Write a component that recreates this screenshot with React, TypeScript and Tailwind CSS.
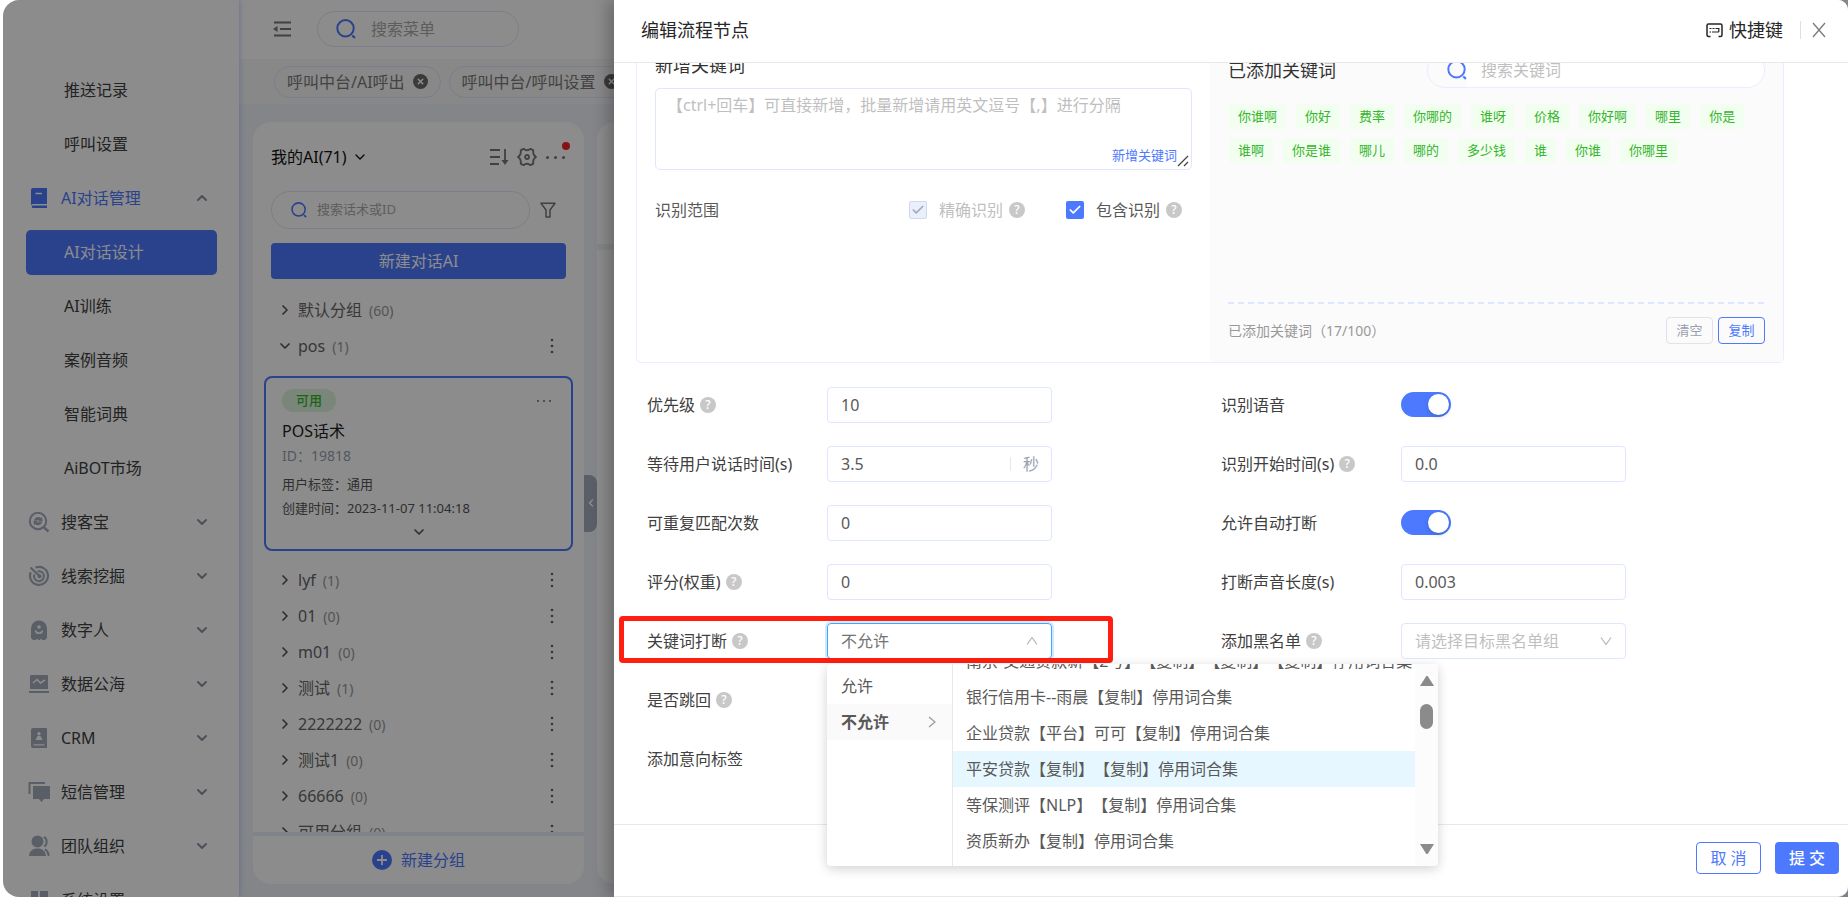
import type { ReactNode } from "react";
import { Check, ChevronDown, ChevronLeft, ChevronRight, ChevronUp, X } from "lucide-react";
import clsx from "clsx";

type IconName =
  | "book"
  | "search"
  | "radar"
  | "ghost"
  | "screen"
  | "contact"
  | "message"
  | "team"
  | "grid";

interface NavItem {
  label: string;
  icon?: IconName;
  open?: boolean;
  active?: boolean;
}

const NAV_ITEMS: NavItem[] = [
  { label: "推送记录" },
  { label: "呼叫设置" },
  { label: "AI对话管理", icon: "book", open: true },
  { label: "AI对话设计", active: true },
  { label: "AI训练" },
  { label: "案例音频" },
  { label: "智能词典" },
  { label: "AiBOT市场" },
  { label: "搜客宝", icon: "search" },
  { label: "线索挖掘", icon: "radar" },
  { label: "数字人", icon: "ghost" },
  { label: "数据公海", icon: "screen" },
  { label: "CRM", icon: "contact" },
  { label: "短信管理", icon: "message" },
  { label: "团队组织", icon: "team" },
  { label: "系统设置", icon: "grid" },
];

const GROUPS = [
  { name: "lyf", count: 1 },
  { name: "01", count: 0 },
  { name: "m01", count: 0 },
  { name: "测试", count: 1 },
  { name: "2222222", count: 0 },
  { name: "测试1", count: 0 },
  { name: "66666", count: 0 },
  { name: "可用分组", count: 0 },
];

const KEYWORDS = [
  "你谁啊", "你好", "费率", "你哪的", "谁呀", "价格", "你好啊", "哪里", "你是",
  "谁啊", "你是谁", "哪儿", "哪的", "多少钱", "谁", "你谁", "你哪里",
];

const WORD_SETS = [
  "南京-交通贷款新【2号】【复制】【复制】【复制】停用词合集",
  "银行信用卡--雨晨【复制】停用词合集",
  "企业贷款【平台】可可【复制】停用词合集",
  "平安贷款【复制】【复制】停用词合集",
  "等保测评【NLP】【复制】停用词合集",
  "资质新办【复制】停用词合集",
];

function NavIcon({ name }: { name: IconName }) {
  const shapes: Record<IconName, ReactNode> = {
    book: (
      <>
        <path d="M5 1h14v16H5a2 2 0 0 0-2 2V3a2 2 0 0 1 2-2z" />
        <path d="M5 18.500h14V21H5a1.250 1.250 0 0 1 0-2.500z" />
        <path d="M7.500 6.500h6.500" stroke="#fff" strokeWidth="1.600" />
      </>
    ),
    search: (
      <>
        <circle cx="10" cy="10" r="8.200" stroke="currentColor" strokeWidth="2" fill="none" />
        <path d="M16 16.500l4.500 4" stroke="currentColor" strokeWidth="2.400" />
        <path d="M6 9.500a4.200 4.200 0 0 1 6.800-2.600l1.200-1 .6 4.600H10l1.200-1.400a2 2 0 0 0-2.200.4z" />
        <path d="M14 11a4.200 4.200 0 0 1-6.800 2.300l-1.200 1-.6-4.600H10l-1.200 1.500a2 2 0 0 0 2.200-.2z" />
      </>
    ),
    radar: (
      <>
        <path d="M7.500 2.600a9 9 0 1 1-4.700 4.600" stroke="currentColor" strokeWidth="2.200" fill="none" />
        <path d="M9.500 6.400a5 5 0 1 1-3.200 3" stroke="currentColor" strokeWidth="2" fill="none" />
        <path d="M2.500 2.500L12 11.500" stroke="currentColor" strokeWidth="2.200" />
        <circle cx="11.500" cy="11.300" r="2" />
      </>
    ),
    ghost: (
      <>
        <path d="M3 9.500a8 8 0 0 1 16 0V19l-2 2h-2.500l-1.500-1.200L11.500 21h-1L9 19.800 7.500 21H5l-2-2z" />
        <circle cx="11" cy="8" r="1.800" fill="#fff" />
        <path d="M7.500 11.500a3.600 3.600 0 0 0 7 0" stroke="#fff" strokeWidth="1.600" fill="none" />
      </>
    ),
    screen: (
      <>
        <path d="M3 2h16a1 1 0 0 1 1 1v13H2V3a1 1 0 0 1 1-1z" />
        <path d="M1 18h20v2H1z" />
        <path d="M5 10l4-3.500 3.500 3.500L17 7" stroke="#fff" strokeWidth="1.600" fill="none" />
      </>
    ),
    contact: (
      <>
        <path d="M5 1h14v20H5a2 2 0 0 1-2-2V3a2 2 0 0 1 2-2z" />
        <circle cx="11" cy="6.800" r="1.700" fill="#fff" />
        <path d="M7.500 13l2-4h3l2 4zM5.500 17.200h11v1.400h-11z" fill="#fff" />
      </>
    ),
    message: (
      <>
        <path d="M1.500 13V2H17" stroke="currentColor" strokeWidth="2" fill="none" />
        <path d="M5 5h17v13h-6l-2.500 3-2.500-3H5z" />
      </>
    ),
    team: (
      <>
        <circle cx="9.500" cy="6.500" r="6" />
        <path d="M1 21c.5-5 3.500-7.500 8.500-7.500S17.500 16 18 21z" />
        <path d="M16 2c3.500 1.800 3.500 7.500.3 9.500M17 14.500c2.200 1.200 3.500 3.500 3.700 6.500" stroke="currentColor" strokeWidth="2" fill="none" />
      </>
    ),
    grid: <path d="M3 2h7v8H3zM12 2h8v8h-8zM3 12h7v8H3zM12 12h8v8h-8z" />,
  };

  return (
    <svg viewBox="0 0 22 22" className="size-[22px] shrink-0" fill="currentColor" aria-hidden="true">
      {shapes[name]}
    </svg>
  );
}

function SearchIcon({ className }: { className: string }) {
  return (
    <svg viewBox="0 0 20 20" className={clsx("shrink-0 text-[#4d79ff]", className)} fill="none" stroke="currentColor" strokeWidth="2" aria-hidden="true">
      <circle cx="9.500" cy="9.300" r="8.200" />
      <path d="M16.300 16.500l2.600 2.400" strokeWidth="2.200" />
    </svg>
  );
}

function Help() {
  return (
    <span className="flex size-4 shrink-0 items-center justify-center rounded-full bg-[#c8c8c8] text-[12px] leading-none font-medium text-white">
      ?
    </span>
  );
}

function Sidebar() {
  return (
    <nav className="relative z-10 flex w-[236px] shrink-0 flex-col bg-white pt-[63px] text-[16px] text-[#404040] shadow-[1px_0_5px_rgba(77,121,255,0.3)]">
      {NAV_ITEMS.map((item) => (
        <div key={item.label} className="flex h-[54px] shrink-0 items-center pr-[22px] pl-[23px]">
          {item.icon ? (
            <a
              href="#"
              className={clsx("flex flex-1 items-center gap-[11px] pr-[7px] pl-[2px]", item.open && "text-[#4d79ff]")}
            >
              <span className={item.open ? "text-[#4d79ff]" : "text-[#a5abbb]"}>
                <NavIcon name={item.icon} />
              </span>
              <span className="flex-1">{item.label}</span>
              {item.open ? (
                <ChevronUp className="size-4 text-[#8d92a0]" strokeWidth={3} />
              ) : (
                <ChevronDown className="size-4 text-[#8d92a0]" strokeWidth={3} />
              )}
            </a>
          ) : (
            <a
              href="#"
              className={clsx(
                "flex h-[45px] flex-1 items-center rounded-[5px] pl-[38px]",
                item.active && "bg-[#4d79ff] text-white",
              )}
            >
              {item.label}
            </a>
          )}
        </div>
      ))}
    </nav>
  );
}

function PageTab({ label }: { label: string }) {
  return (
    <div className="flex h-8 shrink-0 items-center gap-2 rounded-full border border-[#dfe5fb] px-3 text-[16px] text-[#7a7a7a]">
      {label}
      <button type="button" aria-label="关闭" className="flex size-[15px] items-center justify-center rounded-full bg-[#6b6b6b] text-white">
        <X className="size-[9px]" strokeWidth={4} />
      </button>
    </div>
  );
}

function MoreDots() {
  return (
    <svg viewBox="0 0 4 16" className="h-4 w-1" fill="#666" aria-hidden="true">
      <circle cx="2" cy="2" r="1.300" />
      <circle cx="2" cy="8" r="1.300" />
      <circle cx="2" cy="14" r="1.300" />
    </svg>
  );
}

function GroupRow({ name, count, open, menu = true }: { name: string; count: number; open?: boolean; menu?: boolean }) {
  return (
    <div className="flex h-9 shrink-0 items-center pr-[30px] pl-6">
      {open ? (
        <ChevronDown className="size-4 text-[#555]" strokeWidth={2.5} />
      ) : (
        <ChevronRight className="size-4 text-[#555]" strokeWidth={2.5} />
      )}
      <span className="ml-[5px] text-[16px] text-[#666]">{name}</span>
      <span className="ml-[7px] flex-1 text-[14px] text-[#999]">({count})</span>
      {menu && <MoreDots />}
    </div>
  );
}

function ScriptCard() {
  return (
    <article className="mx-[11px] mt-3 mb-[11px] flex h-[175px] shrink-0 flex-col rounded-lg border-2 border-[#4d79ff] px-4 pt-[11px] text-[13px] text-[#555]">
      <div className="flex items-center justify-between">
        <span className="flex h-[23px] items-center rounded-full bg-[#dcf5dc] px-[14px] font-medium text-[#35b52b]">可用</span>
        <span className="mr-1 flex gap-1">
          <i className="size-[2px] rounded-full bg-[#666]" />
          <i className="size-[2px] rounded-full bg-[#666]" />
          <i className="size-[2px] rounded-full bg-[#666]" />
        </span>
      </div>
      <h3 className="mt-[7px] text-[16px] leading-6 text-[#222]">POS话术</h3>
      <p className="mt-px text-[14px] leading-6 text-[#999fb0]">ID：19818</p>
      <p className="mt-1 leading-6">用户标签：通用</p>
      <p className="leading-6">创建时间：2023-11-07 11:04:18</p>
      <ChevronDown className="mt-1 size-4 self-center" strokeWidth={2.5} />
    </article>
  );
}

function ScriptPanel() {
  return (
    <section className="flex w-[331px] shrink-0 flex-col overflow-hidden rounded-[18px] bg-white">
      <div className="flex items-center pt-[23px] pr-[18px] pl-[18px] text-[16px] text-[#111]">
        <span className="leading-6">我的AI(71)</span>
        <ChevronDown className="ml-[5px] size-4" strokeWidth={2} />
        <span className="ml-auto flex items-center gap-2 text-[#777]">
          <svg viewBox="0 0 20 18" className="h-[18px] w-5" fill="none" stroke="currentColor" strokeWidth="1.800" aria-hidden="true">
            <path d="M1 2h10M1 9h10M1 16h9M16 1v13" />
            <path d="M12.500 12h7L16 17z" fill="currentColor" stroke="none" />
          </svg>
          <svg viewBox="0 0 20 20" className="size-5" fill="none" stroke="currentColor" strokeWidth="1.800" strokeLinejoin="round" aria-hidden="true">
            <path d="M6.500 1.800Q10 4.800 13.500 1.800L16.300 3.400Q15.500 8 19 10Q15.500 12 16.300 16.600L13.500 18.200Q10 15.200 6.500 18.200L3.700 16.600Q4.500 12 1 10Q4.500 8 3.700 3.400z" />
            <circle cx="10" cy="10" r="2" />
          </svg>
          <span className="relative flex gap-[5px] px-px">
            <i className="size-[3px] rounded-full bg-[#777]" />
            <i className="size-[3px] rounded-full bg-[#777]" />
            <i className="size-[3px] rounded-full bg-[#777]" />
            <i className="absolute -top-[14px] -right-1 size-2 rounded-full bg-[#f5222d]" />
          </span>
        </span>
      </div>
      <div className="mt-[22px] flex items-center pr-7 pl-[18px]">
        <label className="flex h-[38px] flex-1 items-center gap-[10px] rounded-full border border-[#dfe5fb] pl-[19px]">
          <SearchIcon className="size-4" />
          <input
            aria-label="搜索话术"
            placeholder="搜索话术或ID"
            className="w-full min-w-0 bg-transparent text-[13px] outline-none placeholder:text-[#aaa]"
          />
        </label>
        <svg viewBox="0 0 16 16" className="ml-[10px] size-4" fill="none" stroke="#777" strokeWidth="1.500" strokeLinejoin="round" aria-hidden="true">
          <path d="M1 1.200h14L10 8v7H6V8z" />
        </svg>
      </div>
      <button type="button" className="mx-[18px] mt-[14px] h-9 shrink-0 rounded-[4px] bg-[#4d79ff] text-[16px] text-white">
        新建对话AI
      </button>
      <div className="mt-[13px] flex min-h-0 flex-1 flex-col overflow-hidden">
        <GroupRow name="默认分组" count={60} menu={false} />
        <GroupRow name="pos" count={1} open />
        <ScriptCard />
        {GROUPS.map((group) => (
          <GroupRow key={group.name} name={group.name} count={group.count} />
        ))}
      </div>
      <button type="button" className="flex h-[52px] shrink-0 items-center justify-center gap-[9px] border-t-4 border-[#eaeffa] text-[16px] text-[#4d79ff]">
        <svg viewBox="0 0 20 20" className="size-5" aria-hidden="true">
          <circle cx="10" cy="10" r="10" fill="#4d79ff" />
          <path d="M10 5v10M5 10h10" stroke="#fff" strokeWidth="1.800" />
        </svg>
        新建分组
      </button>
    </section>
  );
}

function Workspace() {
  return (
    <main className="flex min-w-0 flex-1 flex-col bg-[#eff2f8]">
      <header className="flex h-[59px] shrink-0 items-center bg-white pb-[2px] pl-[34px]">
        <svg viewBox="0 0 18 16" className="h-4 w-[18px]" fill="none" stroke="#777" strokeWidth="1.800" aria-hidden="true">
          <path d="M1 1.500h17M7 8h11M1 14.500h17" />
          <path d="M0 8l4.500-3v6z" fill="#777" stroke="none" />
        </svg>
        <label className="ml-[26px] flex h-9 w-[202px] items-center gap-[15px] rounded-full border border-[#dfe5fb] pl-[18px]">
          <SearchIcon className="size-5" />
          <input
            aria-label="搜索菜单"
            placeholder="搜索菜单"
            className="w-full min-w-0 bg-transparent text-[16px] outline-none placeholder:text-[#aaa]"
          />
        </label>
      </header>
      <div className="flex h-[45px] shrink-0 items-center gap-2 overflow-hidden bg-[#f8f8f8] pl-[35px]">
        <PageTab label="呼叫中台/AI呼出" />
        <PageTab label="呼叫中台/呼叫设置" />
      </div>
      <div className="flex min-h-0 flex-1 pt-[18px] pb-[13px] pl-[14px]">
        <ScriptPanel />
        <button type="button" aria-label="收起" className="flex h-[57px] w-[13px] items-center justify-center self-center rounded-r-lg bg-[#a5abbb] text-white">
          <ChevronLeft className="size-3" strokeWidth={3} />
        </button>
        <div className="flex flex-1 flex-col gap-[6px]">
          <div className="h-[122px] rounded-t-[18px] bg-white" />
          <div className="flex-1 rounded-b-[18px] bg-white" />
        </div>
      </div>
    </main>
  );
}

function CheckField({ label, disabled }: { label: string; disabled?: boolean }) {
  return (
    <div className="flex items-center gap-[6px]">
      <label className={clsx("flex items-center gap-3", disabled ? "text-[#bfbfbf]" : "text-[#595959]")}>
        <span className="grid place-items-center">
          <input
            type="checkbox"
            defaultChecked
            disabled={disabled}
            className="size-[18px] appearance-none rounded-[2px] bg-[#4d79ff] [grid-area:1/1] disabled:border disabled:border-[#d2d8ea] disabled:bg-[#eaeffd]"
          />
          <Check
            className={clsx("pointer-events-none size-[14px] [grid-area:1/1]", disabled ? "text-[#a5abbb]" : "text-white")}
            strokeWidth={3}
          />
        </span>
        {label}
      </label>
      <Help />
    </div>
  );
}

function KeywordPanel() {
  return (
    <section className="-mt-[33px] mr-[64px] ml-[22px] flex rounded-[5px] border border-[#e8edff]">
      <div className="flex flex-1 flex-col px-[18px] pt-[16px] text-[16px]">
        <label htmlFor="new-keyword" className="text-[18px] leading-9 text-[#333]">
          新增关键词
        </label>
        <div className="mt-[5px] grid rounded-[5px] border border-[#dfe6ff]">
          <textarea
            id="new-keyword"
            placeholder="【ctrl+回车】可直接新增，批量新增请用英文逗号【,】进行分隔"
            className="h-[80px] resize-none px-[11px] pt-1 text-[16px] leading-6 outline-none [grid-area:1/1] placeholder:text-[#bfbfbf]"
          />
          <div className="flex items-end self-end justify-self-end pr-[2px] pb-[2px] [grid-area:1/1]">
            <button type="button" className="pb-[2px] text-[13px] leading-5 text-[#4d79ff]">
              新增关键词
            </button>
            <svg viewBox="0 0 12 12" className="size-3" stroke="#444" strokeWidth="1.300" aria-hidden="true">
              <path d="M1 11L11 1M7 11l4-4" />
            </svg>
          </div>
        </div>
        <div className="mt-7 flex h-6 items-center text-[16px] text-[#595959]">
          <span>识别范围</span>
          <div className="mr-[10px] ml-auto flex gap-[41px]">
            <CheckField label="精确识别" disabled />
            <CheckField label="包含识别" />
          </div>
        </div>
      </div>
      <div className="flex flex-1 flex-col bg-[#fbfbfb] px-[18px] pt-[21px] pb-[18px]">
        <div className="flex items-center justify-between">
          <h3 className="text-[18px] text-[#333]">已添加关键词</h3>
          <label className="flex h-9 w-[338px] items-center overflow-hidden rounded-full border border-[#e8edff]">
            <span className="pl-[19px]">
              <SearchIcon className="size-5" />
            </span>
            <input
              aria-label="搜索关键词"
              placeholder="搜索关键词"
              className="h-full min-w-0 flex-1 bg-white pl-[14px] text-[16px] outline-none placeholder:text-[#bfbfbf]"
            />
          </label>
        </div>
        <ul className="mt-4 ml-px flex min-h-[198px] flex-wrap content-start gap-x-[10px] gap-y-[9px]">
          {KEYWORDS.map((word) => (
            <li key={word} className="h-[25px] rounded-[2px] bg-[#f2fff0] px-[9px] text-[13px] leading-[25px] text-[#35b52b]">
              {word}
            </li>
          ))}
        </ul>
        <div className="h-[2px] bg-[repeating-linear-gradient(90deg,#dfe6ff_0_6px,transparent_6px_10px)]" />
        <div className="mt-[13px] flex items-center gap-[5px] text-[13px]">
          <span className="flex-1 text-[14px] text-[#999]">已添加关键词（17/100）</span>
          <button type="button" className="h-[27px] w-[47px] rounded-[4px] border border-[#e0e3ea] text-[#999fb0]">
            清空
          </button>
          <button type="button" className="h-[27px] w-[47px] rounded-[4px] border border-[#4d79ff] text-[#4d79ff]">
            复制
          </button>
        </div>
      </div>
    </section>
  );
}

interface FieldProps {
  id: string;
  label: string;
  help?: boolean;
  children?: ReactNode;
}

function Field({ id, label, help, children }: FieldProps) {
  return (
    <div className="relative flex h-[59px] items-center">
      <div className="flex w-[180px] shrink-0 items-center gap-[5px]">
        <label htmlFor={id}>{label}</label>
        {help && <Help />}
      </div>
      {children}
    </div>
  );
}

function TextInput({ id, value }: { id: string; value?: string }) {
  return (
    <input
      id={id}
      defaultValue={value}
      className="h-9 w-[225px] rounded-[4px] border border-[#dfe6ff] bg-white px-[13px] text-[#595959] outline-none"
    />
  );
}

function Switch({ id }: { id: string }) {
  return (
    <input
      id={id}
      type="checkbox"
      role="switch"
      defaultChecked
      className="flex h-[25px] w-[50px] appearance-none justify-end rounded-full bg-[#4d79ff] p-[2px] before:size-[21px] before:rounded-full before:bg-white before:shadow-[0_2px_4px_rgba(0,35,11,0.2)]"
    />
  );
}

function SelectBox({ id, text, focused }: { id: string; text: string; focused?: boolean }) {
  return (
    <div className="grid w-[225px] items-center">
      <select
        id={id}
        className={clsx(
          "h-9 appearance-none rounded-[4px] border px-[13px] outline-none [grid-area:1/1]",
          focused
            ? "border-[#40a9ff] text-[#737373] shadow-[0_0_0_2px_rgba(24,144,255,0.2)]"
            : "border-[#dfe6ff] text-[#bfbfbf]",
        )}
      >
        <option>{text}</option>
      </select>
      <svg
        viewBox="0 0 12 8"
        className="pointer-events-none mr-[14px] h-2 w-3 justify-self-end [grid-area:1/1]"
        fill="none"
        stroke="#b5b5b5"
        strokeWidth="1.200"
        aria-hidden="true"
      >
        <path d={focused ? "M1 7.500L6 .5l5 7" : "M1 .5l5 7 5-7"} />
      </svg>
    </div>
  );
}

function WordSetMenu() {
  return (
    <div className="absolute top-[53px] left-[180px] z-20 flex h-[202px] w-[611px] overflow-hidden rounded-[4px] bg-white text-[#595959] shadow-[0_3px_12px_rgba(0,0,0,0.18)]">
      <ul className="w-[126px] shrink-0 border-r border-[#e8e8e8] pt-1">
        <li>
          <button type="button" className="h-9 w-full pl-[14px] text-left">
            允许
          </button>
        </li>
        <li>
          <button type="button" className="flex h-9 w-full items-center justify-between bg-[#fafafa] pr-4 pl-[14px] font-semibold">
            不允许
            <svg viewBox="0 0 8 12" className="h-3 w-2" fill="none" stroke="#999" strokeWidth="1.200" aria-hidden="true">
              <path d="M1 1l6 5-6 5" />
            </svg>
          </button>
        </li>
      </ul>
      <ul className="-mt-[21px] flex-1">
        {WORD_SETS.map((name, index) => (
          <li key={name}>
            <button
              type="button"
              className={clsx(
                "h-9 w-full pl-[13px] text-left whitespace-nowrap [text-spacing-trim:space-all]",
                index === 3 && "bg-[#e6f7ff]",
              )}
            >
              {name}
            </button>
          </li>
        ))}
      </ul>
      <div className="flex w-[23px] flex-col items-center bg-[#fcfcfc] pt-3 pb-3">
        <svg viewBox="0 0 14 10" className="h-[10px] w-[14px]" fill="#8b8b8b" aria-hidden="true">
          <path d="M6 .6a1.200 1.200 0 0 1 2 0L14 10H0z" />
        </svg>
        <div className="mt-[18px] h-[25px] w-[13px] rounded-full bg-[#8b8b8b]" />
        <svg viewBox="0 0 14 10" className="mt-auto h-[10px] w-[14px]" fill="#8b8b8b" aria-hidden="true">
          <path d="M6 9.400a1.200 1.200 0 0 0 2 0L14 0H0z" />
        </svg>
      </div>
    </div>
  );
}

function NodeForm() {
  return (
    <form className="mt-3 grid grid-cols-2 pr-[53px] pl-[33px] text-[16px] text-[#404040]">
      <div>
        <Field id="priority" label="优先级" help>
          <TextInput id="priority" value="10" />
        </Field>
        <Field id="wait" label="等待用户说话时间(s)">
          <div className="flex h-9 w-[225px] items-center rounded-[4px] border border-[#dfe6ff] text-[#595959]">
            <input id="wait" defaultValue="3.5" className="min-w-0 flex-1 pl-[13px] outline-none" />
            <span className="mr-3 border-l border-[#e5e8f2] pl-3 leading-[14px] text-[#999fb0]">秒</span>
          </div>
        </Field>
        <Field id="repeat" label="可重复匹配次数">
          <TextInput id="repeat" value="0" />
        </Field>
        <Field id="score" label="评分(权重)" help>
          <TextInput id="score" value="0" />
        </Field>
        <Field id="interrupt" label="关键词打断" help>
          <SelectBox id="interrupt" text="不允许" focused />
          <div className="pointer-events-none absolute top-[5px] -left-[28px] h-[47px] w-[494px] rounded-[4px] border-5 border-[#ff1e0f]" />
          <WordSetMenu />
        </Field>
        <Field id="jump" label="是否跳回" help>
          <input id="jump" type="radio" className="size-4" />
        </Field>
        <Field id="intent" label="添加意向标签">
          <TextInput id="intent" />
        </Field>
      </div>
      <div>
        <Field id="voice" label="识别语音">
          <Switch id="voice" />
        </Field>
        <Field id="start" label="识别开始时间(s)" help>
          <TextInput id="start" value="0.0" />
        </Field>
        <Field id="auto" label="允许自动打断">
          <Switch id="auto" />
        </Field>
        <Field id="length" label="打断声音长度(s)">
          <TextInput id="length" value="0.003" />
        </Field>
        <Field id="blacklist" label="添加黑名单" help>
          <SelectBox id="blacklist" text="请选择目标黑名单组" />
        </Field>
      </div>
    </form>
  );
}

function NodeDrawer() {
  return (
    <aside className="absolute inset-y-0 right-0 left-[614px] flex flex-col rounded-r-[10px] border-b border-[#e8e8e8] bg-white shadow-[-6px_0_16px_rgba(0,0,0,0.25)]">
      <header className="relative z-10 flex h-[63px] shrink-0 items-center rounded-tr-[10px] border-b border-[#e8e8e8] bg-white pr-[15px] pb-[2px] pl-[27px] text-[18px] text-[#262626]">
        <h2 className="flex-1">编辑流程节点</h2>
        <button type="button" className="flex items-center gap-[6px]">
          <svg viewBox="0 0 17 15" className="h-[15px] w-[17px]" fill="none" stroke="currentColor" strokeWidth="1.500" aria-hidden="true">
            <path d="M4.500 13.500H2.500A1.500 1.500 0 0 1 1 12V2.500A1.500 1.500 0 0 1 2.500 1h12A1.500 1.500 0 0 1 16 2.500V12a1.500 1.500 0 0 1-1.500 1.500h-2" />
            <path d="M3.500 5.500h2M6.500 5.500h2M9.500 5.500h4M3.500 9h1.500M6 9h7M12.800 5.500V9" strokeWidth="1.200" />
          </svg>
          快捷键
        </button>
        <span className="ml-[17px] h-[18px] w-px bg-[#dedfe6]" />
        <button type="button" aria-label="关闭" className="ml-1 text-[#7a7a7a]">
          <svg viewBox="0 0 28 28" className="size-7" stroke="currentColor" strokeWidth="1.300" aria-hidden="true">
            <path d="M8 7l12 14M20 7L8 21" />
          </svg>
        </button>
      </header>
      <div className="min-h-0 flex-1">
        <KeywordPanel />
        <NodeForm />
      </div>
      <footer className="flex h-[72px] shrink-0 items-start justify-end gap-[14px] border-t border-[#e8e8e8] pt-[17px] pr-[9px] text-[16px]">
        <button type="button" className="h-8 w-[65px] rounded-[4px] border border-[#4d79ff] text-[#4d79ff]">
          取 消
        </button>
        <button type="button" className="h-8 w-16 rounded-[4px] bg-[#4d79ff] font-medium text-white">
          提 交
        </button>
      </footer>
    </aside>
  );
}

export default function App() {
  return (
    <div className="relative h-screen overflow-hidden bg-white pl-[3px] font-['Noto_Sans','Noto_Sans_CJK_SC',sans-serif]">
      <div className="relative isolate flex h-full overflow-hidden rounded-l-[16px]">
        <Sidebar />
        <Workspace />
        <div className="absolute inset-0 z-20 bg-black/45" />
      </div>
      <NodeDrawer />
    </div>
  );
}
